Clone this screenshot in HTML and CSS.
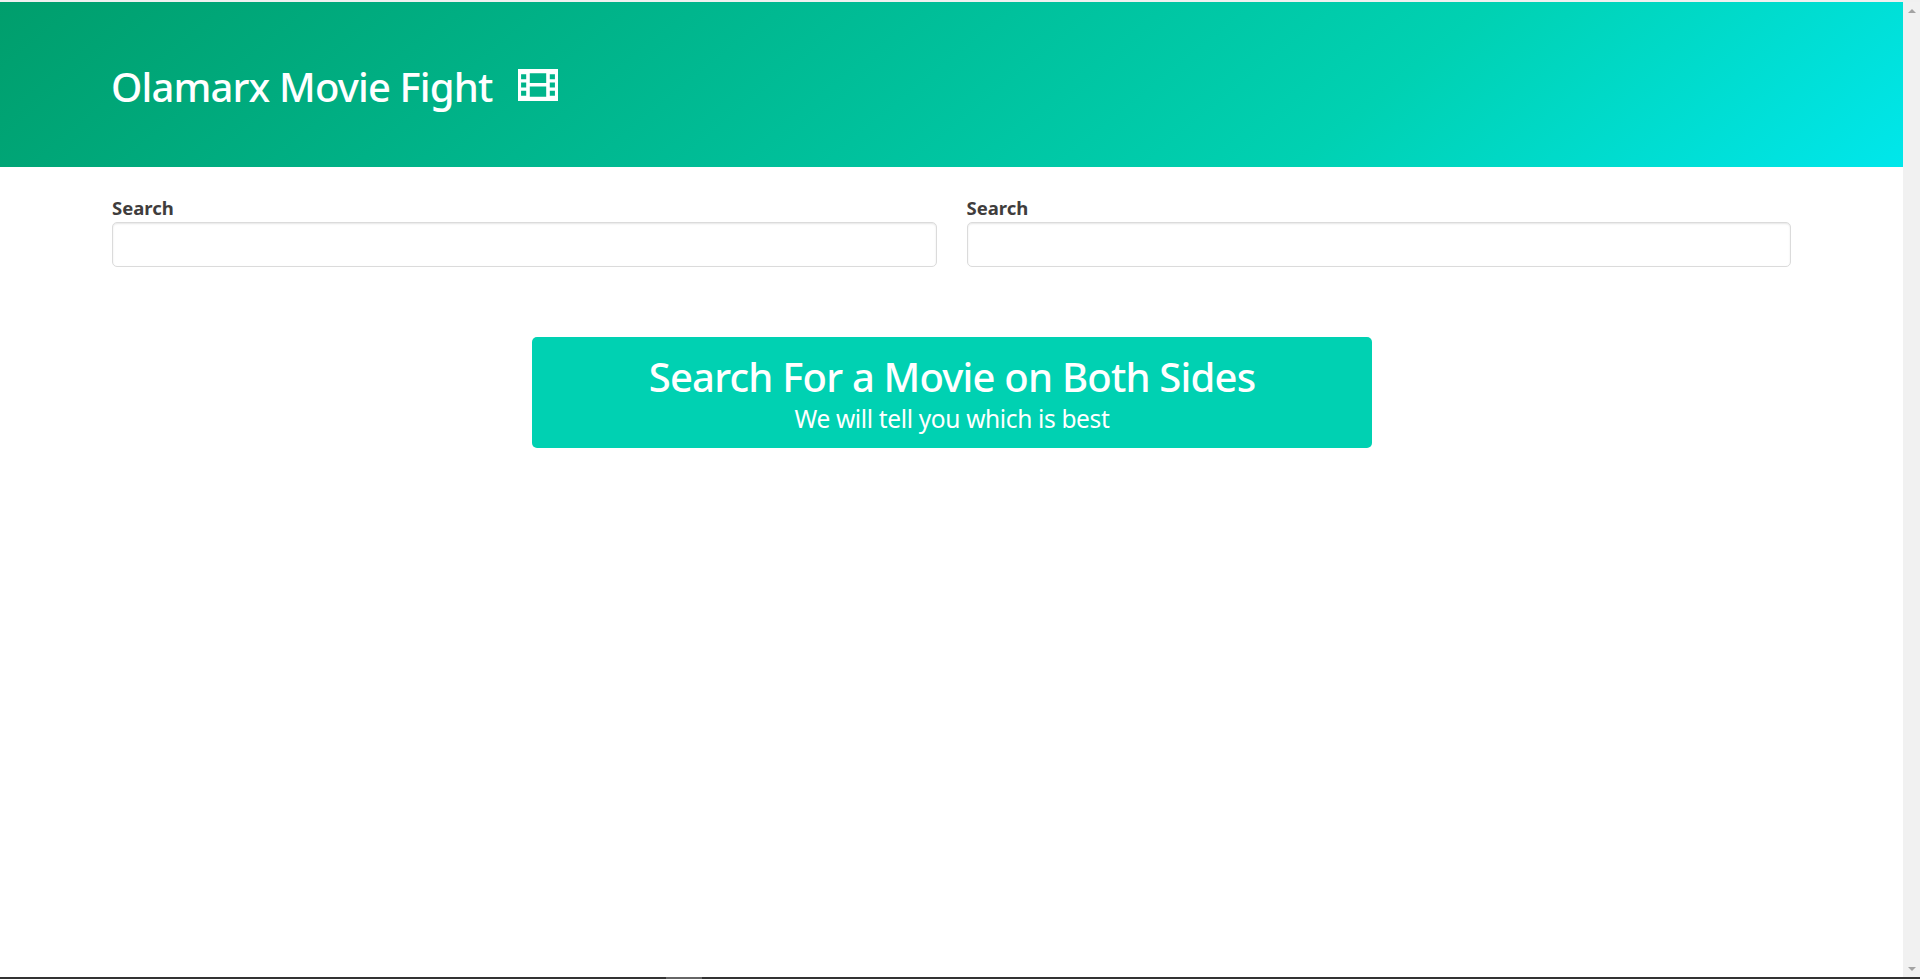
FILE: index.html
```html
<!DOCTYPE html>
<html lang="en">
<head>
<meta charset="utf-8">
<title>Olamarx Movie Fight</title>
<link rel="stylesheet" href="styles.css">
</head>
<body>
<div class="top-line"></div>
<div class="window">
  <main class="page">
    <header class="hero">
      <h1 class="hero-title">Olamarx Movie Fight
        <svg class="film" viewBox="0 0 39 31" aria-hidden="true"><path fill-rule="evenodd" d="M0 0H39V31H0ZM3 5V10H8V5ZM3 13V18H8V13ZM3 21V26H8V21ZM31 5V10H36V5ZM31 13V18H36V13ZM31 21V26H36V21ZM11.5 4V13.5H27.5V4ZM11.5 17V27H27.5V17Z"/></svg>
      </h1>
    </header>
    <section class="searches">
      <div class="field">
        <label class="label">Search</label>
        <input class="input" type="text">
      </div>
      <div class="field">
        <label class="label">Search</label>
        <input class="input" type="text">
      </div>
    </section>
    <section class="notice">
      <h2 class="notice-title">Search For a Movie on Both Sides</h2>
      <p class="notice-sub">We will tell you which is best</p>
    </section>
  </main>
  <aside class="scrollbar">
    <span class="arrow arrow-up"></span>
    <span class="arrow arrow-down"></span>
  </aside>
</div>
<div class="taskbar"><span class="taskbar-thumb"></span></div>
</body>
</html>
```
FILE: styles.css
```css
* { box-sizing: border-box; }
html, body { height: 100%; margin: 0; }
body {
  display: flex;
  flex-direction: column;
  overflow: hidden;
  background: #fff;
  font-family: "Noto Sans", "Open Sans", sans-serif;
  color: #363636;
}
.top-line { height: 2px; background: #f0f0f0; flex: none; }
.window { flex: 1; display: flex; min-height: 0; }
.page { flex: 1; min-width: 0; }
.hero {
  height: 165px;
  padding: 5px 112px 0 111px;
  display: flex;
  align-items: center;
  background: linear-gradient(141deg, #009e6c 0, #00d1b2 71%, #00e7eb 100%);
}
.hero-title {
  margin: 0;
  display: flex;
  align-items: center;
  gap: 26px;
  color: #fff;
  font-size: 40px;
  font-weight: 500;
  letter-spacing: -.85px;
  line-height: 1.2;
}
.film { width: 40px; height: 32px; margin-top: -4px; fill: #fff; flex: none; }
.searches {
  display: flex;
  gap: 30px;
  padding: 26px 112px 0;
}
.field { flex: 1; }
.label { display: block; font-size: 18.5px; font-weight: 700; line-height: 29px; color: #403d3d; }
.input {
  display: block;
  width: 100%;
  height: 45px;
  border: 1px solid #dbdbdb;
  border-radius: 5px;
  box-shadow: inset 0 1px 2px rgba(10, 10, 10, .1);
  background: #fff;
}
.notice {
  width: 840px;
  height: 111px;
  margin: 70px 0 0 532px;
  padding-top: 15px;
  border-radius: 5px;
  background: #00d1b2;
  color: #fff;
  text-align: center;
}
.notice-title { margin: 0; font-size: 40px; font-weight: 500; letter-spacing: -.8px; line-height: 50px; }
.notice-sub { margin: 0; font-size: 24.5px; letter-spacing: -.35px; line-height: 33px; }
.scrollbar {
  width: 17px;
  flex: none;
  background: #f1f1f1;
  display: flex;
  flex-direction: column;
  justify-content: space-between;
  align-items: center;
  padding: 7px 0 6px;
}
.arrow { width: 0; height: 0; border-left: 4px solid transparent; border-right: 4px solid transparent; }
.arrow-up { border-bottom: 4px solid #a3a3a3; }
.arrow-down { border-top: 4px solid #a3a3a3; }
.taskbar { height: 2px; flex: none; background: #333; padding-left: 666px; }
.taskbar-thumb { display: block; width: 36px; height: 2px; background: #666; }
```
